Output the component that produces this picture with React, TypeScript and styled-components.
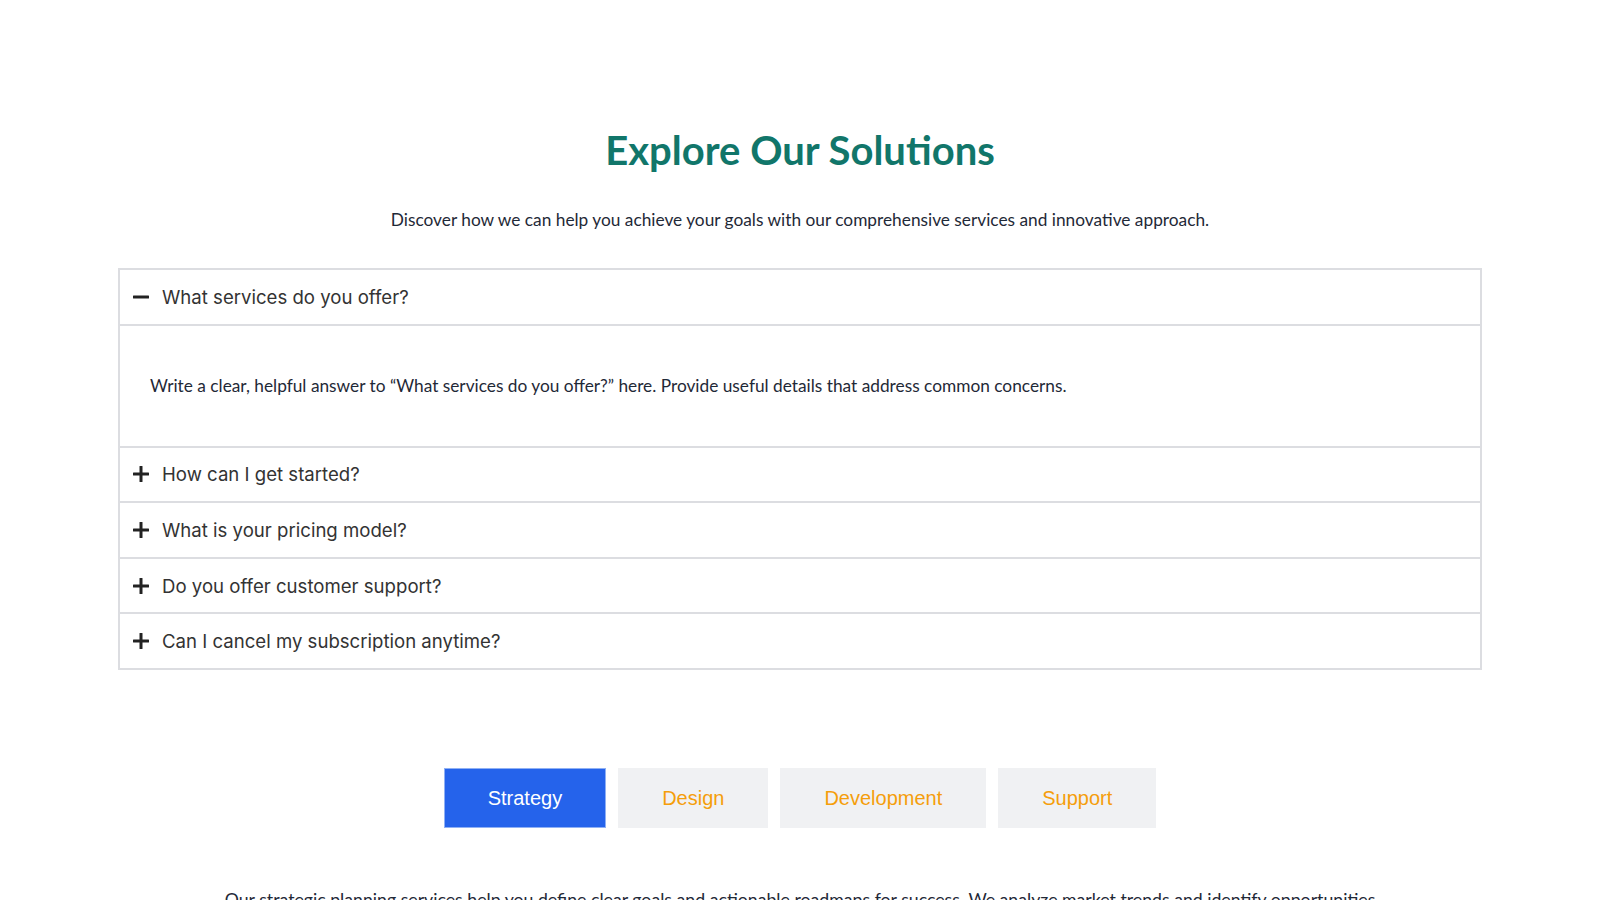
import React, { useState } from 'react'
import styled, { createGlobalStyle } from 'styled-components'

const GlobalStyle = createGlobalStyle`
  * { box-sizing: border-box; }
  body {
    margin: 0;
    background: #ffffff;
    font-family: Lato, "Noto Sans", sans-serif;
    color: #1f2937;
  }
`

const Page = styled.main`
  padding: 126px 118px 0;
  height: 900px;
  overflow: hidden;
`

const Header = styled.header`
  text-align: center;
`

const Title = styled.h2`
  margin: 0;
  font-family: Lato, "Noto Sans", sans-serif;
  font-size: 40px;
  line-height: 48px;
  font-weight: 700;
  color: #11766a;
`

const Lead = styled.p`
  margin: 34px 0 0;
  font-size: 17.3px;
  line-height: 24px;
  color: #1f2937;
`

const Accordion = styled.div`
  margin-top: 36px;
  border: 2px solid #dcdde1;
  border-bottom: none;
`

const Item = styled.div`
  border-bottom: 2px solid #dcdde1;
`

const Trigger = styled.button`
  display: flex;
  align-items: center;
  gap: 12px;
  width: 100%;
  height: 53.6px;
  padding: 0 12px;
  border: none;
  background: #fff;
  font-family: Inter, "Noto Sans", sans-serif;
  font-size: 18.6px;
  font-weight: 400;
  color: #333;
  text-align: left;
  cursor: pointer;
`

const Icon = styled.svg`
  width: 18px;
  height: 18px;
  flex: none;
`

const Panel = styled.div`
  border-top: 2px solid #dcdde1;
  padding: 48px 30px;
  font-size: 17.3px;
  line-height: 24px;
  color: #1f2937;
`

const Tabs = styled.div`
  display: flex;
  justify-content: center;
  gap: 12px;
  margin-top: 98px;
`

const Tab = styled.button<{ $active?: boolean }>`
  padding: 15px 43px;
  border: 1px solid ${(p) => (p.$active ? '#8fb0f4' : '#f0f1f3')};
  background: ${(p) => (p.$active ? '#2563eb' : '#f0f1f3')};
  color: ${(p) => (p.$active ? '#ffffff' : '#f59e0b')};
  font-family: "Liberation Sans", Arial, sans-serif;
  font-size: 20px;
  line-height: 28px;
  cursor: pointer;
`

const TabText = styled.p`
  margin: 58px auto 0;
  max-width: 1165px;
  text-align: center;
  font-size: 17.7px;
  line-height: 28px;
  color: #1f2937;
`

const faqs = [
  'What services do you offer?',
  'How can I get started?',
  'What is your pricing model?',
  'Do you offer customer support?',
  'Can I cancel my subscription anytime?',
]

const tabs = [
  {
    name: 'Strategy',
    text: 'Our strategic planning services help you define clear goals and actionable roadmaps for success. We analyze market trends and identify opportunities to help your business grow and stay ahead of the competition.',
  },
  { name: 'Design', text: 'Our design team crafts intuitive, beautiful experiences that put your users first.' },
  { name: 'Development', text: 'We build fast, reliable and scalable products with modern technologies.' },
  { name: 'Support', text: 'Our support team is here to help whenever you need us.' },
]

const ToggleIcon = ({ open }: { open: boolean }) => (
  <Icon viewBox="0 0 18 18">
    <rect x="1" y="7.5" width="16" height="3" rx="0.5" fill="#222" />
    {!open && <rect x="7.5" y="1" width="3" height="16" rx="0.5" fill="#222" />}
  </Icon>
)

const App = () => {
  const [open, setOpen] = useState<number | null>(0)
  const [tab, setTab] = useState(0)

  return (
    <Page>
      <GlobalStyle />
      <Header>
        <Title>Explore Our Solutions</Title>
        <Lead>
          Discover how we can help you achieve your goals with our comprehensive services and innovative approach.
        </Lead>
      </Header>

      <Accordion>
        {faqs.map((q, i) => (
          <Item key={q}>
            <Trigger onClick={() => setOpen(open === i ? null : i)}>
              <ToggleIcon open={open === i} />
              {q}
            </Trigger>
            {open === i && (
              <Panel>
                Write a clear, helpful answer to “{q}” here. Provide useful details that address common concerns.
              </Panel>
            )}
          </Item>
        ))}
      </Accordion>

      <Tabs>
        {tabs.map((t, i) => (
          <Tab key={t.name} $active={tab === i} onClick={() => setTab(i)}>
            {t.name}
          </Tab>
        ))}
      </Tabs>
      <TabText>{tabs[tab].text}</TabText>
    </Page>
  )
}

export default App
